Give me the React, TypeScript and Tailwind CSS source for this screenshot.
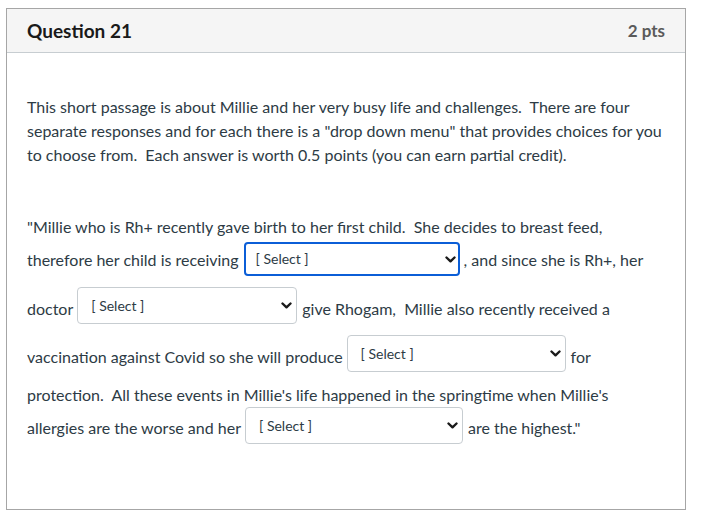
import type { ReactNode } from 'react';

function Chevron() {
  return (
    <svg width="11" height="7" viewBox="0 0 11 7" className="shrink-0">
      <path d="M1.5 1.5 L5.5 5.3 L9.5 1.5" fill="none" stroke="#1a1a1a" strokeWidth="2.4" strokeLinecap="round" strokeLinejoin="round" />
    </svg>
  );
}

function Dropdown({ width, focused = false, className = '' }: { width: string; focused?: boolean; className?: string }) {
  return (
    <span
      className={`inline-flex items-center justify-between bg-white rounded-[4px] text-[14px] text-[#2d3b45] shrink-0 ${
        focused ? 'h-[34px] border-2 border-[#0b5ed7] pl-[10px] pr-[2px]' : 'h-[37px] border border-[#c7cdd1] pl-[13px] pr-[4px]'
      } ${width} ${className}`}
    >
      <span className="leading-[20px]">[ Select ]</span>
      <Chevron />
    </span>
  );
}

function Row({ children, className = '' }: { children: ReactNode; className?: string }) {
  return <div className={`flex items-center whitespace-pre ${className}`}>{children}</div>;
}

export default function App() {
  return (
    <div className="min-h-[523px] bg-white pt-2 pl-[6px]" style={{ fontFamily: 'Lato, "Noto Sans", sans-serif' }}>
      <div className="w-[680px] border border-[#a6a6a6]">
        <div className="h-[44px] bg-[#f5f5f5] border-b border-[#c7cdd1] flex items-center justify-between pl-[20px] pr-[20px]">
          <h2 className="text-[19px] leading-[28px] font-bold text-[#1a1a1a]">Question 21</h2>
          <span className="text-[17px] leading-[28px] font-bold text-[#5a5a5a]">2 pts</span>
        </div>

        <div className="pt-[42px] pb-[61px] pl-[20px] text-[16px] leading-[24px] text-[#2d3b45]">
          <div className="whitespace-pre">
            <div>This short passage is about Millie and her very busy life and challenges.  There are four</div>
            <div>separate responses and for each there is a "drop down menu" that provides choices for you</div>
            <div>to choose from.  Each answer is worth 0.5 points (you can earn partial credit).</div>
          </div>

          <div className="mt-[48px]">
            <Row>"Millie who is Rh+ recently gave birth to her first child.  She decides to breast feed,</Row>
            <Row className="mt-[3px]">
              <span>therefore her child is receiving</span>
              <Dropdown width="w-[216px]" focused className="ml-[5px] mr-[4px] mb-[2px]" />
              <span>, and since she is Rh+, her</span>
            </Row>
            <Row className="mt-[9px]">
              <span>doctor</span>
              <Dropdown width="w-[220px]" className="ml-[4px] mr-[5px] mb-[7px]" />
              <span>give Rhogam,  Millie also recently received a</span>
            </Row>
            <Row className="mt-[4px]">
              <span>vaccination against Covid so she will produce</span>
              <Dropdown width="w-[219px]" className="ml-[4px] mr-[5px] mb-[7px]" />
              <span>for</span>
            </Row>
            <Row className="mt-[4px]">protection.  All these events in Millie's life happened in the springtime when Millie's</Row>
            <Row>
              <span>allergies are the worse and her</span>
              <Dropdown width="w-[218px]" className="ml-[4px] mr-[5px] mb-[4px]" />
              <span>are the highest."</span>
            </Row>
          </div>
        </div>
      </div>
    </div>
  );
}
